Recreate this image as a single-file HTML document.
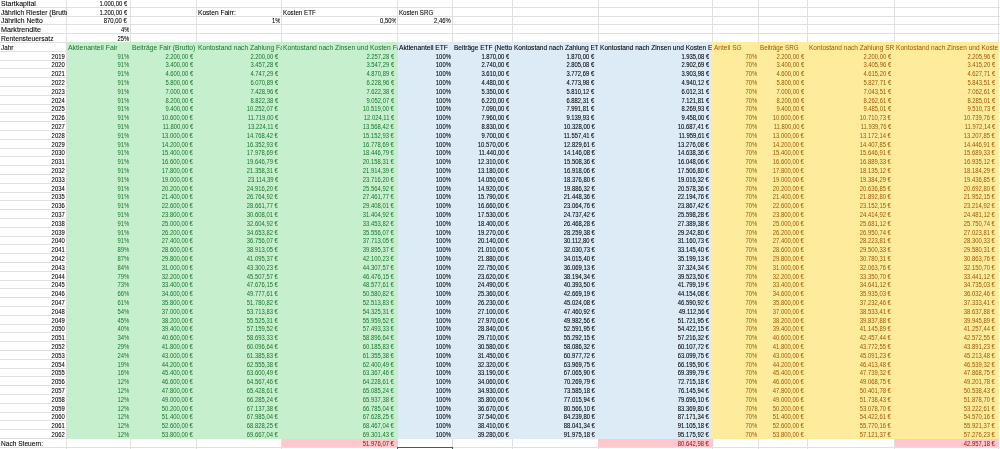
<!DOCTYPE html><html><head><meta charset="utf-8"><style>
html,body{margin:0;padding:0;width:1000px;height:449px;overflow:hidden;background:#fff;}
#s{position:absolute;left:0;top:0;width:1000px;height:449px;overflow:hidden;font-family:"Liberation Sans",sans-serif;font-size:6.6px;filter:blur(0px);}
.f{position:absolute;}
.h{position:absolute;height:1px;background:#e0e0e0;}
.v{position:absolute;width:1px;background:#e0e0e0;}
.c{position:absolute;height:8.8px;overflow:hidden;white-space:nowrap;line-height:8.8px;}
.c span{display:inline-block;-webkit-text-stroke:0px currentColor;}
.l{text-align:left;} .l span{transform-origin:0 0;}
.r{text-align:right;} .r span{transform-origin:100% 0;}
.k{color:#000;} .k span,.bl span{-webkit-text-stroke:0.08px #000;} .g{color:#1a7428;} .o{color:#9c5700;} .b{color:#9c0006;} .bl{color:#000;}

</style></head><body><div id="s">
<div class="h" style="left:0;top:6.80px;width:1000px"></div>
<div class="h" style="left:0;top:15.60px;width:1000px"></div>
<div class="h" style="left:0;top:24.40px;width:1000px"></div>
<div class="h" style="left:0;top:33.20px;width:1000px"></div>
<div class="h" style="left:0;top:42.00px;width:1000px"></div>
<div class="h" style="left:0;top:50.80px;width:66.75px"></div>
<div class="h" style="left:998.50px;top:50.80px;width:1.50px"></div>
<div class="h" style="left:0;top:59.60px;width:66.75px"></div>
<div class="h" style="left:998.50px;top:59.60px;width:1.50px"></div>
<div class="h" style="left:0;top:68.40px;width:66.75px"></div>
<div class="h" style="left:998.50px;top:68.40px;width:1.50px"></div>
<div class="h" style="left:0;top:77.20px;width:66.75px"></div>
<div class="h" style="left:998.50px;top:77.20px;width:1.50px"></div>
<div class="h" style="left:0;top:86.00px;width:66.75px"></div>
<div class="h" style="left:998.50px;top:86.00px;width:1.50px"></div>
<div class="h" style="left:0;top:94.80px;width:66.75px"></div>
<div class="h" style="left:998.50px;top:94.80px;width:1.50px"></div>
<div class="h" style="left:0;top:103.60px;width:66.75px"></div>
<div class="h" style="left:998.50px;top:103.60px;width:1.50px"></div>
<div class="h" style="left:0;top:112.40px;width:66.75px"></div>
<div class="h" style="left:998.50px;top:112.40px;width:1.50px"></div>
<div class="h" style="left:0;top:121.20px;width:66.75px"></div>
<div class="h" style="left:998.50px;top:121.20px;width:1.50px"></div>
<div class="h" style="left:0;top:130.00px;width:66.75px"></div>
<div class="h" style="left:998.50px;top:130.00px;width:1.50px"></div>
<div class="h" style="left:0;top:138.80px;width:66.75px"></div>
<div class="h" style="left:998.50px;top:138.80px;width:1.50px"></div>
<div class="h" style="left:0;top:147.60px;width:66.75px"></div>
<div class="h" style="left:998.50px;top:147.60px;width:1.50px"></div>
<div class="h" style="left:0;top:156.40px;width:66.75px"></div>
<div class="h" style="left:998.50px;top:156.40px;width:1.50px"></div>
<div class="h" style="left:0;top:165.20px;width:66.75px"></div>
<div class="h" style="left:998.50px;top:165.20px;width:1.50px"></div>
<div class="h" style="left:0;top:174.00px;width:66.75px"></div>
<div class="h" style="left:998.50px;top:174.00px;width:1.50px"></div>
<div class="h" style="left:0;top:182.80px;width:66.75px"></div>
<div class="h" style="left:998.50px;top:182.80px;width:1.50px"></div>
<div class="h" style="left:0;top:191.60px;width:66.75px"></div>
<div class="h" style="left:998.50px;top:191.60px;width:1.50px"></div>
<div class="h" style="left:0;top:200.40px;width:66.75px"></div>
<div class="h" style="left:998.50px;top:200.40px;width:1.50px"></div>
<div class="h" style="left:0;top:209.20px;width:66.75px"></div>
<div class="h" style="left:998.50px;top:209.20px;width:1.50px"></div>
<div class="h" style="left:0;top:218.00px;width:66.75px"></div>
<div class="h" style="left:998.50px;top:218.00px;width:1.50px"></div>
<div class="h" style="left:0;top:226.80px;width:66.75px"></div>
<div class="h" style="left:998.50px;top:226.80px;width:1.50px"></div>
<div class="h" style="left:0;top:235.60px;width:66.75px"></div>
<div class="h" style="left:998.50px;top:235.60px;width:1.50px"></div>
<div class="h" style="left:0;top:244.40px;width:66.75px"></div>
<div class="h" style="left:998.50px;top:244.40px;width:1.50px"></div>
<div class="h" style="left:0;top:253.20px;width:66.75px"></div>
<div class="h" style="left:998.50px;top:253.20px;width:1.50px"></div>
<div class="h" style="left:0;top:262.00px;width:66.75px"></div>
<div class="h" style="left:998.50px;top:262.00px;width:1.50px"></div>
<div class="h" style="left:0;top:270.80px;width:66.75px"></div>
<div class="h" style="left:998.50px;top:270.80px;width:1.50px"></div>
<div class="h" style="left:0;top:279.60px;width:66.75px"></div>
<div class="h" style="left:998.50px;top:279.60px;width:1.50px"></div>
<div class="h" style="left:0;top:288.40px;width:66.75px"></div>
<div class="h" style="left:998.50px;top:288.40px;width:1.50px"></div>
<div class="h" style="left:0;top:297.20px;width:66.75px"></div>
<div class="h" style="left:998.50px;top:297.20px;width:1.50px"></div>
<div class="h" style="left:0;top:306.00px;width:66.75px"></div>
<div class="h" style="left:998.50px;top:306.00px;width:1.50px"></div>
<div class="h" style="left:0;top:314.80px;width:66.75px"></div>
<div class="h" style="left:998.50px;top:314.80px;width:1.50px"></div>
<div class="h" style="left:0;top:323.60px;width:66.75px"></div>
<div class="h" style="left:998.50px;top:323.60px;width:1.50px"></div>
<div class="h" style="left:0;top:332.40px;width:66.75px"></div>
<div class="h" style="left:998.50px;top:332.40px;width:1.50px"></div>
<div class="h" style="left:0;top:341.20px;width:66.75px"></div>
<div class="h" style="left:998.50px;top:341.20px;width:1.50px"></div>
<div class="h" style="left:0;top:350.00px;width:66.75px"></div>
<div class="h" style="left:998.50px;top:350.00px;width:1.50px"></div>
<div class="h" style="left:0;top:358.80px;width:66.75px"></div>
<div class="h" style="left:998.50px;top:358.80px;width:1.50px"></div>
<div class="h" style="left:0;top:367.60px;width:66.75px"></div>
<div class="h" style="left:998.50px;top:367.60px;width:1.50px"></div>
<div class="h" style="left:0;top:376.40px;width:66.75px"></div>
<div class="h" style="left:998.50px;top:376.40px;width:1.50px"></div>
<div class="h" style="left:0;top:385.20px;width:66.75px"></div>
<div class="h" style="left:998.50px;top:385.20px;width:1.50px"></div>
<div class="h" style="left:0;top:394.00px;width:66.75px"></div>
<div class="h" style="left:998.50px;top:394.00px;width:1.50px"></div>
<div class="h" style="left:0;top:402.80px;width:66.75px"></div>
<div class="h" style="left:998.50px;top:402.80px;width:1.50px"></div>
<div class="h" style="left:0;top:411.60px;width:66.75px"></div>
<div class="h" style="left:998.50px;top:411.60px;width:1.50px"></div>
<div class="h" style="left:0;top:420.40px;width:66.75px"></div>
<div class="h" style="left:998.50px;top:420.40px;width:1.50px"></div>
<div class="h" style="left:0;top:429.20px;width:66.75px"></div>
<div class="h" style="left:998.50px;top:429.20px;width:1.50px"></div>
<div class="h" style="left:0;top:438.00px;width:1000px"></div>
<div class="h" style="left:0;top:446.80px;width:1000px"></div>
<div class="v" style="left:66.25px;top:0;height:42.50px"></div>
<div class="v" style="left:66.25px;top:438.50px;height:20px"></div>
<div class="v" style="left:130.00px;top:0;height:42.50px"></div>
<div class="v" style="left:130.00px;top:438.50px;height:20px"></div>
<div class="v" style="left:196.25px;top:0;height:42.50px"></div>
<div class="v" style="left:196.25px;top:438.50px;height:20px"></div>
<div class="v" style="left:281.25px;top:0;height:42.50px"></div>
<div class="v" style="left:281.25px;top:438.50px;height:20px"></div>
<div class="v" style="left:397.25px;top:0;height:42.50px"></div>
<div class="v" style="left:397.25px;top:438.50px;height:20px"></div>
<div class="v" style="left:452.00px;top:0;height:42.50px"></div>
<div class="v" style="left:452.00px;top:438.50px;height:20px"></div>
<div class="v" style="left:512.00px;top:0;height:42.50px"></div>
<div class="v" style="left:512.00px;top:438.50px;height:20px"></div>
<div class="v" style="left:597.75px;top:0;height:42.50px"></div>
<div class="v" style="left:597.75px;top:438.50px;height:20px"></div>
<div class="v" style="left:712.00px;top:0;height:42.50px"></div>
<div class="v" style="left:712.00px;top:438.50px;height:20px"></div>
<div class="v" style="left:758.00px;top:0;height:42.50px"></div>
<div class="v" style="left:758.00px;top:438.50px;height:20px"></div>
<div class="v" style="left:807.00px;top:0;height:42.50px"></div>
<div class="v" style="left:807.00px;top:438.50px;height:20px"></div>
<div class="v" style="left:894.00px;top:0;height:42.50px"></div>
<div class="v" style="left:894.00px;top:438.50px;height:20px"></div>
<div class="v" style="left:998.00px;top:0;height:42.50px"></div>
<div class="v" style="left:998.00px;top:438.50px;height:20px"></div>
<div class="v" style="left:66.25px;top:0;height:449px"></div>
<div class="v" style="left:998.00px;top:0;height:449px"></div>
<div class="f" style="left:66.75px;top:42.00px;width:331.00px;height:396.50px;background:#c6efce"></div>
<div class="f" style="left:397.75px;top:42.00px;width:314.25px;height:396.50px;background:#ddebf7"></div>
<div class="f" style="left:712.00px;top:42.00px;width:287.00px;height:396.50px;background:#ffeb9c"></div>
<div class="f" style="left:281.75px;top:438.50px;width:116.00px;height:8.80px;background:#ffc7ce"></div>
<div class="f" style="left:598.25px;top:438.50px;width:114.25px;height:8.80px;background:#ffc7ce"></div>
<div class="f" style="left:894.50px;top:438.50px;width:104.00px;height:8.80px;background:#ffc7ce"></div>
<div class="f" style="left:397px;top:447px;width:56px;height:10px;border:1px solid #217346;box-sizing:border-box"></div>
<div class="c l k" style="left:0.60px;top:-0.20px;width:66.15px"><span style="transform:scaleX(1.058)">Startkapital</span></div>
<div class="c r k" style="left:66.75px;top:-0.20px;width:60.15px"><span style="transform:scaleX(0.89)">1.000,00 €</span></div>
<div class="c l k" style="left:0.60px;top:8.60px;width:66.15px"><span style="transform:scaleX(1.023)">Jährlich Riester (Brutto)</span></div>
<div class="c r k" style="left:66.75px;top:8.60px;width:60.15px"><span style="transform:scaleX(0.89)">1.200,00 €</span></div>
<div class="c l k" style="left:198.15px;top:8.60px;width:83.60px"><span style="transform:scaleX(1.001)">Kosten Fairr:</span></div>
<div class="c l k" style="left:283.15px;top:8.60px;width:114.60px"><span style="transform:scaleX(0.94)">Kosten ETF</span></div>
<div class="c l k" style="left:399.15px;top:8.60px;width:53.35px"><span style="transform:scaleX(0.932)">Kosten SRG</span></div>
<div class="c l k" style="left:0.60px;top:17.40px;width:66.15px"><span style="transform:scaleX(1.035)">Jährlich Netto</span></div>
<div class="c r k" style="left:66.75px;top:17.40px;width:60.15px"><span style="transform:scaleX(0.89)">870,00 €</span></div>
<div class="c r k" style="left:196.75px;top:17.40px;width:83.70px"><span style="transform:scaleX(0.89)">1%</span></div>
<div class="c r k" style="left:281.75px;top:17.40px;width:114.70px"><span style="transform:scaleX(0.89)">0,50%</span></div>
<div class="c r k" style="left:397.75px;top:17.40px;width:53.45px"><span style="transform:scaleX(0.89)">2,46%</span></div>
<div class="c l k" style="left:0.60px;top:26.20px;width:66.15px"><span style="transform:scaleX(1.089)">Marktrendite</span></div>
<div class="c r k" style="left:66.75px;top:26.20px;width:62.45px"><span style="transform:scaleX(0.89)">4%</span></div>
<div class="c l k" style="left:0.60px;top:35.00px;width:129.90px"><span style="transform:scaleX(1.016)">Rentensteuersatz</span></div>
<div class="c r k" style="left:66.75px;top:35.00px;width:62.45px"><span style="transform:scaleX(0.89)">25%</span></div>
<div class="c l k" style="left:0.60px;top:43.80px;width:66.15px"><span style="transform:scaleX(0.953)">Jahr</span></div>
<div class="c l g" style="left:68.15px;top:43.80px;width:62.35px"><span style="transform:scaleX(1.05)">Aktienanteil Fair</span></div>
<div class="c l g" style="left:131.90px;top:43.80px;width:64.85px"><span style="transform:scaleX(1.028)">Beiträge Fair (Brutto)</span></div>
<div class="c l g" style="left:198.15px;top:43.80px;width:83.60px"><span style="transform:scaleX(1.014)">Kontostand nach Zahlung Fair</span></div>
<div class="c l g" style="left:283.15px;top:43.80px;width:114.60px"><span style="transform:scaleX(1.014)">Kontostand nach Zinsen und Kosten Fair</span></div>
<div class="c l bl" style="left:399.15px;top:43.80px;width:53.35px"><span style="transform:scaleX(1.011)">Aktienanteil ETF</span></div>
<div class="c l bl" style="left:453.90px;top:43.80px;width:58.60px"><span style="transform:scaleX(0.993)">Beiträge ETF (Netto)</span></div>
<div class="c l bl" style="left:513.90px;top:43.80px;width:84.35px"><span style="transform:scaleX(0.993)">Kontostand nach Zahlung ETF</span></div>
<div class="c l bl" style="left:599.65px;top:43.80px;width:112.85px"><span style="transform:scaleX(0.999)">Kontostand nach Zinsen und Kosten ETF</span></div>
<div class="c l o" style="left:713.90px;top:43.80px;width:44.60px"><span style="transform:scaleX(0.994)">Anteil SG</span></div>
<div class="c l o" style="left:759.90px;top:43.80px;width:47.60px"><span style="transform:scaleX(0.946)">Beiträge SRG</span></div>
<div class="c l o" style="left:808.90px;top:43.80px;width:85.60px"><span style="transform:scaleX(0.989)">Kontostand nach Zahlung SRG</span></div>
<div class="c l o" style="left:895.90px;top:43.80px;width:102.60px"><span style="transform:scaleX(0.996)">Kontostand nach Zinsen und Kosten SRG</span></div>
<div class="c r k" style="left:-0.80px;top:52.60px;width:65.75px"><span style="transform:scaleX(0.89)">2019</span></div>
<div class="c r g" style="left:66.75px;top:52.60px;width:62.45px"><span style="transform:scaleX(0.89)">91%</span></div>
<div class="c r g" style="left:130.50px;top:52.60px;width:62.65px"><span style="transform:scaleX(0.89)">2.200,00 €</span></div>
<div class="c r g" style="left:196.75px;top:52.60px;width:81.40px"><span style="transform:scaleX(0.89)">2.200,00 €</span></div>
<div class="c r g" style="left:281.75px;top:52.60px;width:112.40px"><span style="transform:scaleX(0.89)">2.257,28 €</span></div>
<div class="c r bl" style="left:397.75px;top:52.60px;width:53.45px"><span style="transform:scaleX(0.89)">100%</span></div>
<div class="c r bl" style="left:452.50px;top:52.60px;width:56.40px"><span style="transform:scaleX(0.89)">1.870,00 €</span></div>
<div class="c r bl" style="left:512.50px;top:52.60px;width:82.15px"><span style="transform:scaleX(0.89)">1.870,00 €</span></div>
<div class="c r bl" style="left:598.25px;top:52.60px;width:110.65px"><span style="transform:scaleX(0.89)">1.935,08 €</span></div>
<div class="c r o" style="left:712.50px;top:52.60px;width:44.70px"><span style="transform:scaleX(0.89)">70%</span></div>
<div class="c r o" style="left:758.50px;top:52.60px;width:45.40px"><span style="transform:scaleX(0.89)">2.200,00 €</span></div>
<div class="c r o" style="left:807.50px;top:52.60px;width:83.40px"><span style="transform:scaleX(0.89)">2.200,00 €</span></div>
<div class="c r o" style="left:894.50px;top:52.60px;width:100.40px"><span style="transform:scaleX(0.89)">2.205,96 €</span></div>
<div class="c r k" style="left:-0.80px;top:61.40px;width:65.75px"><span style="transform:scaleX(0.89)">2020</span></div>
<div class="c r g" style="left:66.75px;top:61.40px;width:62.45px"><span style="transform:scaleX(0.89)">91%</span></div>
<div class="c r g" style="left:130.50px;top:61.40px;width:62.65px"><span style="transform:scaleX(0.89)">3.400,00 €</span></div>
<div class="c r g" style="left:196.75px;top:61.40px;width:81.40px"><span style="transform:scaleX(0.89)">3.457,28 €</span></div>
<div class="c r g" style="left:281.75px;top:61.40px;width:112.40px"><span style="transform:scaleX(0.89)">3.547,29 €</span></div>
<div class="c r bl" style="left:397.75px;top:61.40px;width:53.45px"><span style="transform:scaleX(0.89)">100%</span></div>
<div class="c r bl" style="left:452.50px;top:61.40px;width:56.40px"><span style="transform:scaleX(0.89)">2.740,00 €</span></div>
<div class="c r bl" style="left:512.50px;top:61.40px;width:82.15px"><span style="transform:scaleX(0.89)">2.805,08 €</span></div>
<div class="c r bl" style="left:598.25px;top:61.40px;width:110.65px"><span style="transform:scaleX(0.89)">2.902,69 €</span></div>
<div class="c r o" style="left:712.50px;top:61.40px;width:44.70px"><span style="transform:scaleX(0.89)">70%</span></div>
<div class="c r o" style="left:758.50px;top:61.40px;width:45.40px"><span style="transform:scaleX(0.89)">3.400,00 €</span></div>
<div class="c r o" style="left:807.50px;top:61.40px;width:83.40px"><span style="transform:scaleX(0.89)">3.405,96 €</span></div>
<div class="c r o" style="left:894.50px;top:61.40px;width:100.40px"><span style="transform:scaleX(0.89)">3.415,20 €</span></div>
<div class="c r k" style="left:-0.80px;top:70.20px;width:65.75px"><span style="transform:scaleX(0.89)">2021</span></div>
<div class="c r g" style="left:66.75px;top:70.20px;width:62.45px"><span style="transform:scaleX(0.89)">91%</span></div>
<div class="c r g" style="left:130.50px;top:70.20px;width:62.65px"><span style="transform:scaleX(0.89)">4.600,00 €</span></div>
<div class="c r g" style="left:196.75px;top:70.20px;width:81.40px"><span style="transform:scaleX(0.89)">4.747,29 €</span></div>
<div class="c r g" style="left:281.75px;top:70.20px;width:112.40px"><span style="transform:scaleX(0.89)">4.870,89 €</span></div>
<div class="c r bl" style="left:397.75px;top:70.20px;width:53.45px"><span style="transform:scaleX(0.89)">100%</span></div>
<div class="c r bl" style="left:452.50px;top:70.20px;width:56.40px"><span style="transform:scaleX(0.89)">3.610,00 €</span></div>
<div class="c r bl" style="left:512.50px;top:70.20px;width:82.15px"><span style="transform:scaleX(0.89)">3.772,69 €</span></div>
<div class="c r bl" style="left:598.25px;top:70.20px;width:110.65px"><span style="transform:scaleX(0.89)">3.903,98 €</span></div>
<div class="c r o" style="left:712.50px;top:70.20px;width:44.70px"><span style="transform:scaleX(0.89)">70%</span></div>
<div class="c r o" style="left:758.50px;top:70.20px;width:45.40px"><span style="transform:scaleX(0.89)">4.600,00 €</span></div>
<div class="c r o" style="left:807.50px;top:70.20px;width:83.40px"><span style="transform:scaleX(0.89)">4.615,20 €</span></div>
<div class="c r o" style="left:894.50px;top:70.20px;width:100.40px"><span style="transform:scaleX(0.89)">4.627,71 €</span></div>
<div class="c r k" style="left:-0.80px;top:79.00px;width:65.75px"><span style="transform:scaleX(0.89)">2022</span></div>
<div class="c r g" style="left:66.75px;top:79.00px;width:62.45px"><span style="transform:scaleX(0.89)">91%</span></div>
<div class="c r g" style="left:130.50px;top:79.00px;width:62.65px"><span style="transform:scaleX(0.89)">5.800,00 €</span></div>
<div class="c r g" style="left:196.75px;top:79.00px;width:81.40px"><span style="transform:scaleX(0.89)">6.070,89 €</span></div>
<div class="c r g" style="left:281.75px;top:79.00px;width:112.40px"><span style="transform:scaleX(0.89)">6.228,96 €</span></div>
<div class="c r bl" style="left:397.75px;top:79.00px;width:53.45px"><span style="transform:scaleX(0.89)">100%</span></div>
<div class="c r bl" style="left:452.50px;top:79.00px;width:56.40px"><span style="transform:scaleX(0.89)">4.480,00 €</span></div>
<div class="c r bl" style="left:512.50px;top:79.00px;width:82.15px"><span style="transform:scaleX(0.89)">4.773,98 €</span></div>
<div class="c r bl" style="left:598.25px;top:79.00px;width:110.65px"><span style="transform:scaleX(0.89)">4.940,12 €</span></div>
<div class="c r o" style="left:712.50px;top:79.00px;width:44.70px"><span style="transform:scaleX(0.89)">70%</span></div>
<div class="c r o" style="left:758.50px;top:79.00px;width:45.40px"><span style="transform:scaleX(0.89)">5.800,00 €</span></div>
<div class="c r o" style="left:807.50px;top:79.00px;width:83.40px"><span style="transform:scaleX(0.89)">5.827,71 €</span></div>
<div class="c r o" style="left:894.50px;top:79.00px;width:100.40px"><span style="transform:scaleX(0.89)">5.843,51 €</span></div>
<div class="c r k" style="left:-0.80px;top:87.80px;width:65.75px"><span style="transform:scaleX(0.89)">2023</span></div>
<div class="c r g" style="left:66.75px;top:87.80px;width:62.45px"><span style="transform:scaleX(0.89)">91%</span></div>
<div class="c r g" style="left:130.50px;top:87.80px;width:62.65px"><span style="transform:scaleX(0.89)">7.000,00 €</span></div>
<div class="c r g" style="left:196.75px;top:87.80px;width:81.40px"><span style="transform:scaleX(0.89)">7.428,96 €</span></div>
<div class="c r g" style="left:281.75px;top:87.80px;width:112.40px"><span style="transform:scaleX(0.89)">7.622,38 €</span></div>
<div class="c r bl" style="left:397.75px;top:87.80px;width:53.45px"><span style="transform:scaleX(0.89)">100%</span></div>
<div class="c r bl" style="left:452.50px;top:87.80px;width:56.40px"><span style="transform:scaleX(0.89)">5.350,00 €</span></div>
<div class="c r bl" style="left:512.50px;top:87.80px;width:82.15px"><span style="transform:scaleX(0.89)">5.810,12 €</span></div>
<div class="c r bl" style="left:598.25px;top:87.80px;width:110.65px"><span style="transform:scaleX(0.89)">6.012,31 €</span></div>
<div class="c r o" style="left:712.50px;top:87.80px;width:44.70px"><span style="transform:scaleX(0.89)">70%</span></div>
<div class="c r o" style="left:758.50px;top:87.80px;width:45.40px"><span style="transform:scaleX(0.89)">7.000,00 €</span></div>
<div class="c r o" style="left:807.50px;top:87.80px;width:83.40px"><span style="transform:scaleX(0.89)">7.043,51 €</span></div>
<div class="c r o" style="left:894.50px;top:87.80px;width:100.40px"><span style="transform:scaleX(0.89)">7.062,61 €</span></div>
<div class="c r k" style="left:-0.80px;top:96.60px;width:65.75px"><span style="transform:scaleX(0.89)">2024</span></div>
<div class="c r g" style="left:66.75px;top:96.60px;width:62.45px"><span style="transform:scaleX(0.89)">91%</span></div>
<div class="c r g" style="left:130.50px;top:96.60px;width:62.65px"><span style="transform:scaleX(0.89)">8.200,00 €</span></div>
<div class="c r g" style="left:196.75px;top:96.60px;width:81.40px"><span style="transform:scaleX(0.89)">8.822,38 €</span></div>
<div class="c r g" style="left:281.75px;top:96.60px;width:112.40px"><span style="transform:scaleX(0.89)">9.052,07 €</span></div>
<div class="c r bl" style="left:397.75px;top:96.60px;width:53.45px"><span style="transform:scaleX(0.89)">100%</span></div>
<div class="c r bl" style="left:452.50px;top:96.60px;width:56.40px"><span style="transform:scaleX(0.89)">6.220,00 €</span></div>
<div class="c r bl" style="left:512.50px;top:96.60px;width:82.15px"><span style="transform:scaleX(0.89)">6.882,31 €</span></div>
<div class="c r bl" style="left:598.25px;top:96.60px;width:110.65px"><span style="transform:scaleX(0.89)">7.121,81 €</span></div>
<div class="c r o" style="left:712.50px;top:96.60px;width:44.70px"><span style="transform:scaleX(0.89)">70%</span></div>
<div class="c r o" style="left:758.50px;top:96.60px;width:45.40px"><span style="transform:scaleX(0.89)">8.200,00 €</span></div>
<div class="c r o" style="left:807.50px;top:96.60px;width:83.40px"><span style="transform:scaleX(0.89)">8.262,61 €</span></div>
<div class="c r o" style="left:894.50px;top:96.60px;width:100.40px"><span style="transform:scaleX(0.89)">8.285,01 €</span></div>
<div class="c r k" style="left:-0.80px;top:105.40px;width:65.75px"><span style="transform:scaleX(0.89)">2025</span></div>
<div class="c r g" style="left:66.75px;top:105.40px;width:62.45px"><span style="transform:scaleX(0.89)">91%</span></div>
<div class="c r g" style="left:130.50px;top:105.40px;width:62.65px"><span style="transform:scaleX(0.89)">9.400,00 €</span></div>
<div class="c r g" style="left:196.75px;top:105.40px;width:81.40px"><span style="transform:scaleX(0.89)">10.252,07 €</span></div>
<div class="c r g" style="left:281.75px;top:105.40px;width:112.40px"><span style="transform:scaleX(0.89)">10.519,00 €</span></div>
<div class="c r bl" style="left:397.75px;top:105.40px;width:53.45px"><span style="transform:scaleX(0.89)">100%</span></div>
<div class="c r bl" style="left:452.50px;top:105.40px;width:56.40px"><span style="transform:scaleX(0.89)">7.090,00 €</span></div>
<div class="c r bl" style="left:512.50px;top:105.40px;width:82.15px"><span style="transform:scaleX(0.89)">7.991,81 €</span></div>
<div class="c r bl" style="left:598.25px;top:105.40px;width:110.65px"><span style="transform:scaleX(0.89)">8.269,93 €</span></div>
<div class="c r o" style="left:712.50px;top:105.40px;width:44.70px"><span style="transform:scaleX(0.89)">70%</span></div>
<div class="c r o" style="left:758.50px;top:105.40px;width:45.40px"><span style="transform:scaleX(0.89)">9.400,00 €</span></div>
<div class="c r o" style="left:807.50px;top:105.40px;width:83.40px"><span style="transform:scaleX(0.89)">9.485,01 €</span></div>
<div class="c r o" style="left:894.50px;top:105.40px;width:100.40px"><span style="transform:scaleX(0.89)">9.510,73 €</span></div>
<div class="c r k" style="left:-0.80px;top:114.20px;width:65.75px"><span style="transform:scaleX(0.89)">2026</span></div>
<div class="c r g" style="left:66.75px;top:114.20px;width:62.45px"><span style="transform:scaleX(0.89)">91%</span></div>
<div class="c r g" style="left:130.50px;top:114.20px;width:62.65px"><span style="transform:scaleX(0.89)">10.600,00 €</span></div>
<div class="c r g" style="left:196.75px;top:114.20px;width:81.40px"><span style="transform:scaleX(0.89)">11.719,00 €</span></div>
<div class="c r g" style="left:281.75px;top:114.20px;width:112.40px"><span style="transform:scaleX(0.89)">12.024,11 €</span></div>
<div class="c r bl" style="left:397.75px;top:114.20px;width:53.45px"><span style="transform:scaleX(0.89)">100%</span></div>
<div class="c r bl" style="left:452.50px;top:114.20px;width:56.40px"><span style="transform:scaleX(0.89)">7.960,00 €</span></div>
<div class="c r bl" style="left:512.50px;top:114.20px;width:82.15px"><span style="transform:scaleX(0.89)">9.139,93 €</span></div>
<div class="c r bl" style="left:598.25px;top:114.20px;width:110.65px"><span style="transform:scaleX(0.89)">9.458,00 €</span></div>
<div class="c r o" style="left:712.50px;top:114.20px;width:44.70px"><span style="transform:scaleX(0.89)">70%</span></div>
<div class="c r o" style="left:758.50px;top:114.20px;width:45.40px"><span style="transform:scaleX(0.89)">10.600,00 €</span></div>
<div class="c r o" style="left:807.50px;top:114.20px;width:83.40px"><span style="transform:scaleX(0.89)">10.710,73 €</span></div>
<div class="c r o" style="left:894.50px;top:114.20px;width:100.40px"><span style="transform:scaleX(0.89)">10.739,76 €</span></div>
<div class="c r k" style="left:-0.80px;top:123.00px;width:65.75px"><span style="transform:scaleX(0.89)">2027</span></div>
<div class="c r g" style="left:66.75px;top:123.00px;width:62.45px"><span style="transform:scaleX(0.89)">91%</span></div>
<div class="c r g" style="left:130.50px;top:123.00px;width:62.65px"><span style="transform:scaleX(0.89)">11.800,00 €</span></div>
<div class="c r g" style="left:196.75px;top:123.00px;width:81.40px"><span style="transform:scaleX(0.89)">13.224,11 €</span></div>
<div class="c r g" style="left:281.75px;top:123.00px;width:112.40px"><span style="transform:scaleX(0.89)">13.568,42 €</span></div>
<div class="c r bl" style="left:397.75px;top:123.00px;width:53.45px"><span style="transform:scaleX(0.89)">100%</span></div>
<div class="c r bl" style="left:452.50px;top:123.00px;width:56.40px"><span style="transform:scaleX(0.89)">8.830,00 €</span></div>
<div class="c r bl" style="left:512.50px;top:123.00px;width:82.15px"><span style="transform:scaleX(0.89)">10.328,00 €</span></div>
<div class="c r bl" style="left:598.25px;top:123.00px;width:110.65px"><span style="transform:scaleX(0.89)">10.687,41 €</span></div>
<div class="c r o" style="left:712.50px;top:123.00px;width:44.70px"><span style="transform:scaleX(0.89)">70%</span></div>
<div class="c r o" style="left:758.50px;top:123.00px;width:45.40px"><span style="transform:scaleX(0.89)">11.800,00 €</span></div>
<div class="c r o" style="left:807.50px;top:123.00px;width:83.40px"><span style="transform:scaleX(0.89)">11.939,76 €</span></div>
<div class="c r o" style="left:894.50px;top:123.00px;width:100.40px"><span style="transform:scaleX(0.89)">11.972,14 €</span></div>
<div class="c r k" style="left:-0.80px;top:131.80px;width:65.75px"><span style="transform:scaleX(0.89)">2028</span></div>
<div class="c r g" style="left:66.75px;top:131.80px;width:62.45px"><span style="transform:scaleX(0.89)">91%</span></div>
<div class="c r g" style="left:130.50px;top:131.80px;width:62.65px"><span style="transform:scaleX(0.89)">13.000,00 €</span></div>
<div class="c r g" style="left:196.75px;top:131.80px;width:81.40px"><span style="transform:scaleX(0.89)">14.768,42 €</span></div>
<div class="c r g" style="left:281.75px;top:131.80px;width:112.40px"><span style="transform:scaleX(0.89)">15.152,93 €</span></div>
<div class="c r bl" style="left:397.75px;top:131.80px;width:53.45px"><span style="transform:scaleX(0.89)">100%</span></div>
<div class="c r bl" style="left:452.50px;top:131.80px;width:56.40px"><span style="transform:scaleX(0.89)">9.700,00 €</span></div>
<div class="c r bl" style="left:512.50px;top:131.80px;width:82.15px"><span style="transform:scaleX(0.89)">11.557,41 €</span></div>
<div class="c r bl" style="left:598.25px;top:131.80px;width:110.65px"><span style="transform:scaleX(0.89)">11.959,61 €</span></div>
<div class="c r o" style="left:712.50px;top:131.80px;width:44.70px"><span style="transform:scaleX(0.89)">70%</span></div>
<div class="c r o" style="left:758.50px;top:131.80px;width:45.40px"><span style="transform:scaleX(0.89)">13.000,00 €</span></div>
<div class="c r o" style="left:807.50px;top:131.80px;width:83.40px"><span style="transform:scaleX(0.89)">13.172,14 €</span></div>
<div class="c r o" style="left:894.50px;top:131.80px;width:100.40px"><span style="transform:scaleX(0.89)">13.207,85 €</span></div>
<div class="c r k" style="left:-0.80px;top:140.60px;width:65.75px"><span style="transform:scaleX(0.89)">2029</span></div>
<div class="c r g" style="left:66.75px;top:140.60px;width:62.45px"><span style="transform:scaleX(0.89)">91%</span></div>
<div class="c r g" style="left:130.50px;top:140.60px;width:62.65px"><span style="transform:scaleX(0.89)">14.200,00 €</span></div>
<div class="c r g" style="left:196.75px;top:140.60px;width:81.40px"><span style="transform:scaleX(0.89)">16.352,93 €</span></div>
<div class="c r g" style="left:281.75px;top:140.60px;width:112.40px"><span style="transform:scaleX(0.89)">16.778,69 €</span></div>
<div class="c r bl" style="left:397.75px;top:140.60px;width:53.45px"><span style="transform:scaleX(0.89)">100%</span></div>
<div class="c r bl" style="left:452.50px;top:140.60px;width:56.40px"><span style="transform:scaleX(0.89)">10.570,00 €</span></div>
<div class="c r bl" style="left:512.50px;top:140.60px;width:82.15px"><span style="transform:scaleX(0.89)">12.829,61 €</span></div>
<div class="c r bl" style="left:598.25px;top:140.60px;width:110.65px"><span style="transform:scaleX(0.89)">13.276,08 €</span></div>
<div class="c r o" style="left:712.50px;top:140.60px;width:44.70px"><span style="transform:scaleX(0.89)">70%</span></div>
<div class="c r o" style="left:758.50px;top:140.60px;width:45.40px"><span style="transform:scaleX(0.89)">14.200,00 €</span></div>
<div class="c r o" style="left:807.50px;top:140.60px;width:83.40px"><span style="transform:scaleX(0.89)">14.407,85 €</span></div>
<div class="c r o" style="left:894.50px;top:140.60px;width:100.40px"><span style="transform:scaleX(0.89)">14.446,91 €</span></div>
<div class="c r k" style="left:-0.80px;top:149.40px;width:65.75px"><span style="transform:scaleX(0.89)">2030</span></div>
<div class="c r g" style="left:66.75px;top:149.40px;width:62.45px"><span style="transform:scaleX(0.89)">91%</span></div>
<div class="c r g" style="left:130.50px;top:149.40px;width:62.65px"><span style="transform:scaleX(0.89)">15.400,00 €</span></div>
<div class="c r g" style="left:196.75px;top:149.40px;width:81.40px"><span style="transform:scaleX(0.89)">17.978,69 €</span></div>
<div class="c r g" style="left:281.75px;top:149.40px;width:112.40px"><span style="transform:scaleX(0.89)">18.446,79 €</span></div>
<div class="c r bl" style="left:397.75px;top:149.40px;width:53.45px"><span style="transform:scaleX(0.89)">100%</span></div>
<div class="c r bl" style="left:452.50px;top:149.40px;width:56.40px"><span style="transform:scaleX(0.89)">11.440,00 €</span></div>
<div class="c r bl" style="left:512.50px;top:149.40px;width:82.15px"><span style="transform:scaleX(0.89)">14.146,08 €</span></div>
<div class="c r bl" style="left:598.25px;top:149.40px;width:110.65px"><span style="transform:scaleX(0.89)">14.638,36 €</span></div>
<div class="c r o" style="left:712.50px;top:149.40px;width:44.70px"><span style="transform:scaleX(0.89)">70%</span></div>
<div class="c r o" style="left:758.50px;top:149.40px;width:45.40px"><span style="transform:scaleX(0.89)">15.400,00 €</span></div>
<div class="c r o" style="left:807.50px;top:149.40px;width:83.40px"><span style="transform:scaleX(0.89)">15.646,91 €</span></div>
<div class="c r o" style="left:894.50px;top:149.40px;width:100.40px"><span style="transform:scaleX(0.89)">15.689,33 €</span></div>
<div class="c r k" style="left:-0.80px;top:158.20px;width:65.75px"><span style="transform:scaleX(0.89)">2031</span></div>
<div class="c r g" style="left:66.75px;top:158.20px;width:62.45px"><span style="transform:scaleX(0.89)">91%</span></div>
<div class="c r g" style="left:130.50px;top:158.20px;width:62.65px"><span style="transform:scaleX(0.89)">16.600,00 €</span></div>
<div class="c r g" style="left:196.75px;top:158.20px;width:81.40px"><span style="transform:scaleX(0.89)">19.646,79 €</span></div>
<div class="c r g" style="left:281.75px;top:158.20px;width:112.40px"><span style="transform:scaleX(0.89)">20.158,31 €</span></div>
<div class="c r bl" style="left:397.75px;top:158.20px;width:53.45px"><span style="transform:scaleX(0.89)">100%</span></div>
<div class="c r bl" style="left:452.50px;top:158.20px;width:56.40px"><span style="transform:scaleX(0.89)">12.310,00 €</span></div>
<div class="c r bl" style="left:512.50px;top:158.20px;width:82.15px"><span style="transform:scaleX(0.89)">15.508,36 €</span></div>
<div class="c r bl" style="left:598.25px;top:158.20px;width:110.65px"><span style="transform:scaleX(0.89)">16.048,06 €</span></div>
<div class="c r o" style="left:712.50px;top:158.20px;width:44.70px"><span style="transform:scaleX(0.89)">70%</span></div>
<div class="c r o" style="left:758.50px;top:158.20px;width:45.40px"><span style="transform:scaleX(0.89)">16.600,00 €</span></div>
<div class="c r o" style="left:807.50px;top:158.20px;width:83.40px"><span style="transform:scaleX(0.89)">16.889,33 €</span></div>
<div class="c r o" style="left:894.50px;top:158.20px;width:100.40px"><span style="transform:scaleX(0.89)">16.935,12 €</span></div>
<div class="c r k" style="left:-0.80px;top:167.00px;width:65.75px"><span style="transform:scaleX(0.89)">2032</span></div>
<div class="c r g" style="left:66.75px;top:167.00px;width:62.45px"><span style="transform:scaleX(0.89)">91%</span></div>
<div class="c r g" style="left:130.50px;top:167.00px;width:62.65px"><span style="transform:scaleX(0.89)">17.800,00 €</span></div>
<div class="c r g" style="left:196.75px;top:167.00px;width:81.40px"><span style="transform:scaleX(0.89)">21.358,31 €</span></div>
<div class="c r g" style="left:281.75px;top:167.00px;width:112.40px"><span style="transform:scaleX(0.89)">21.914,39 €</span></div>
<div class="c r bl" style="left:397.75px;top:167.00px;width:53.45px"><span style="transform:scaleX(0.89)">100%</span></div>
<div class="c r bl" style="left:452.50px;top:167.00px;width:56.40px"><span style="transform:scaleX(0.89)">13.180,00 €</span></div>
<div class="c r bl" style="left:512.50px;top:167.00px;width:82.15px"><span style="transform:scaleX(0.89)">16.918,06 €</span></div>
<div class="c r bl" style="left:598.25px;top:167.00px;width:110.65px"><span style="transform:scaleX(0.89)">17.506,80 €</span></div>
<div class="c r o" style="left:712.50px;top:167.00px;width:44.70px"><span style="transform:scaleX(0.89)">70%</span></div>
<div class="c r o" style="left:758.50px;top:167.00px;width:45.40px"><span style="transform:scaleX(0.89)">17.800,00 €</span></div>
<div class="c r o" style="left:807.50px;top:167.00px;width:83.40px"><span style="transform:scaleX(0.89)">18.135,12 €</span></div>
<div class="c r o" style="left:894.50px;top:167.00px;width:100.40px"><span style="transform:scaleX(0.89)">18.184,29 €</span></div>
<div class="c r k" style="left:-0.80px;top:175.80px;width:65.75px"><span style="transform:scaleX(0.89)">2033</span></div>
<div class="c r g" style="left:66.75px;top:175.80px;width:62.45px"><span style="transform:scaleX(0.89)">91%</span></div>
<div class="c r g" style="left:130.50px;top:175.80px;width:62.65px"><span style="transform:scaleX(0.89)">19.000,00 €</span></div>
<div class="c r g" style="left:196.75px;top:175.80px;width:81.40px"><span style="transform:scaleX(0.89)">23.114,39 €</span></div>
<div class="c r g" style="left:281.75px;top:175.80px;width:112.40px"><span style="transform:scaleX(0.89)">23.716,20 €</span></div>
<div class="c r bl" style="left:397.75px;top:175.80px;width:53.45px"><span style="transform:scaleX(0.89)">100%</span></div>
<div class="c r bl" style="left:452.50px;top:175.80px;width:56.40px"><span style="transform:scaleX(0.89)">14.050,00 €</span></div>
<div class="c r bl" style="left:512.50px;top:175.80px;width:82.15px"><span style="transform:scaleX(0.89)">18.376,80 €</span></div>
<div class="c r bl" style="left:598.25px;top:175.80px;width:110.65px"><span style="transform:scaleX(0.89)">19.016,32 €</span></div>
<div class="c r o" style="left:712.50px;top:175.80px;width:44.70px"><span style="transform:scaleX(0.89)">70%</span></div>
<div class="c r o" style="left:758.50px;top:175.80px;width:45.40px"><span style="transform:scaleX(0.89)">19.000,00 €</span></div>
<div class="c r o" style="left:807.50px;top:175.80px;width:83.40px"><span style="transform:scaleX(0.89)">19.384,29 €</span></div>
<div class="c r o" style="left:894.50px;top:175.80px;width:100.40px"><span style="transform:scaleX(0.89)">19.436,85 €</span></div>
<div class="c r k" style="left:-0.80px;top:184.60px;width:65.75px"><span style="transform:scaleX(0.89)">2034</span></div>
<div class="c r g" style="left:66.75px;top:184.60px;width:62.45px"><span style="transform:scaleX(0.89)">91%</span></div>
<div class="c r g" style="left:130.50px;top:184.60px;width:62.65px"><span style="transform:scaleX(0.89)">20.200,00 €</span></div>
<div class="c r g" style="left:196.75px;top:184.60px;width:81.40px"><span style="transform:scaleX(0.89)">24.916,20 €</span></div>
<div class="c r g" style="left:281.75px;top:184.60px;width:112.40px"><span style="transform:scaleX(0.89)">25.564,92 €</span></div>
<div class="c r bl" style="left:397.75px;top:184.60px;width:53.45px"><span style="transform:scaleX(0.89)">100%</span></div>
<div class="c r bl" style="left:452.50px;top:184.60px;width:56.40px"><span style="transform:scaleX(0.89)">14.920,00 €</span></div>
<div class="c r bl" style="left:512.50px;top:184.60px;width:82.15px"><span style="transform:scaleX(0.89)">19.886,32 €</span></div>
<div class="c r bl" style="left:598.25px;top:184.60px;width:110.65px"><span style="transform:scaleX(0.89)">20.578,36 €</span></div>
<div class="c r o" style="left:712.50px;top:184.60px;width:44.70px"><span style="transform:scaleX(0.89)">70%</span></div>
<div class="c r o" style="left:758.50px;top:184.60px;width:45.40px"><span style="transform:scaleX(0.89)">20.200,00 €</span></div>
<div class="c r o" style="left:807.50px;top:184.60px;width:83.40px"><span style="transform:scaleX(0.89)">20.636,85 €</span></div>
<div class="c r o" style="left:894.50px;top:184.60px;width:100.40px"><span style="transform:scaleX(0.89)">20.692,80 €</span></div>
<div class="c r k" style="left:-0.80px;top:193.40px;width:65.75px"><span style="transform:scaleX(0.89)">2035</span></div>
<div class="c r g" style="left:66.75px;top:193.40px;width:62.45px"><span style="transform:scaleX(0.89)">91%</span></div>
<div class="c r g" style="left:130.50px;top:193.40px;width:62.65px"><span style="transform:scaleX(0.89)">21.400,00 €</span></div>
<div class="c r g" style="left:196.75px;top:193.40px;width:81.40px"><span style="transform:scaleX(0.89)">26.764,92 €</span></div>
<div class="c r g" style="left:281.75px;top:193.40px;width:112.40px"><span style="transform:scaleX(0.89)">27.461,77 €</span></div>
<div class="c r bl" style="left:397.75px;top:193.40px;width:53.45px"><span style="transform:scaleX(0.89)">100%</span></div>
<div class="c r bl" style="left:452.50px;top:193.40px;width:56.40px"><span style="transform:scaleX(0.89)">15.790,00 €</span></div>
<div class="c r bl" style="left:512.50px;top:193.40px;width:82.15px"><span style="transform:scaleX(0.89)">21.448,36 €</span></div>
<div class="c r bl" style="left:598.25px;top:193.40px;width:110.65px"><span style="transform:scaleX(0.89)">22.194,76 €</span></div>
<div class="c r o" style="left:712.50px;top:193.40px;width:44.70px"><span style="transform:scaleX(0.89)">70%</span></div>
<div class="c r o" style="left:758.50px;top:193.40px;width:45.40px"><span style="transform:scaleX(0.89)">21.400,00 €</span></div>
<div class="c r o" style="left:807.50px;top:193.40px;width:83.40px"><span style="transform:scaleX(0.89)">21.892,80 €</span></div>
<div class="c r o" style="left:894.50px;top:193.40px;width:100.40px"><span style="transform:scaleX(0.89)">21.952,15 €</span></div>
<div class="c r k" style="left:-0.80px;top:202.20px;width:65.75px"><span style="transform:scaleX(0.89)">2036</span></div>
<div class="c r g" style="left:66.75px;top:202.20px;width:62.45px"><span style="transform:scaleX(0.89)">91%</span></div>
<div class="c r g" style="left:130.50px;top:202.20px;width:62.65px"><span style="transform:scaleX(0.89)">22.600,00 €</span></div>
<div class="c r g" style="left:196.75px;top:202.20px;width:81.40px"><span style="transform:scaleX(0.89)">28.661,77 €</span></div>
<div class="c r g" style="left:281.75px;top:202.20px;width:112.40px"><span style="transform:scaleX(0.89)">29.408,01 €</span></div>
<div class="c r bl" style="left:397.75px;top:202.20px;width:53.45px"><span style="transform:scaleX(0.89)">100%</span></div>
<div class="c r bl" style="left:452.50px;top:202.20px;width:56.40px"><span style="transform:scaleX(0.89)">16.660,00 €</span></div>
<div class="c r bl" style="left:512.50px;top:202.20px;width:82.15px"><span style="transform:scaleX(0.89)">23.064,76 €</span></div>
<div class="c r bl" style="left:598.25px;top:202.20px;width:110.65px"><span style="transform:scaleX(0.89)">23.867,42 €</span></div>
<div class="c r o" style="left:712.50px;top:202.20px;width:44.70px"><span style="transform:scaleX(0.89)">70%</span></div>
<div class="c r o" style="left:758.50px;top:202.20px;width:45.40px"><span style="transform:scaleX(0.89)">22.600,00 €</span></div>
<div class="c r o" style="left:807.50px;top:202.20px;width:83.40px"><span style="transform:scaleX(0.89)">23.152,15 €</span></div>
<div class="c r o" style="left:894.50px;top:202.20px;width:100.40px"><span style="transform:scaleX(0.89)">23.214,92 €</span></div>
<div class="c r k" style="left:-0.80px;top:211.00px;width:65.75px"><span style="transform:scaleX(0.89)">2037</span></div>
<div class="c r g" style="left:66.75px;top:211.00px;width:62.45px"><span style="transform:scaleX(0.89)">91%</span></div>
<div class="c r g" style="left:130.50px;top:211.00px;width:62.65px"><span style="transform:scaleX(0.89)">23.800,00 €</span></div>
<div class="c r g" style="left:196.75px;top:211.00px;width:81.40px"><span style="transform:scaleX(0.89)">30.608,01 €</span></div>
<div class="c r g" style="left:281.75px;top:211.00px;width:112.40px"><span style="transform:scaleX(0.89)">31.404,92 €</span></div>
<div class="c r bl" style="left:397.75px;top:211.00px;width:53.45px"><span style="transform:scaleX(0.89)">100%</span></div>
<div class="c r bl" style="left:452.50px;top:211.00px;width:56.40px"><span style="transform:scaleX(0.89)">17.530,00 €</span></div>
<div class="c r bl" style="left:512.50px;top:211.00px;width:82.15px"><span style="transform:scaleX(0.89)">24.737,42 €</span></div>
<div class="c r bl" style="left:598.25px;top:211.00px;width:110.65px"><span style="transform:scaleX(0.89)">25.598,28 €</span></div>
<div class="c r o" style="left:712.50px;top:211.00px;width:44.70px"><span style="transform:scaleX(0.89)">70%</span></div>
<div class="c r o" style="left:758.50px;top:211.00px;width:45.40px"><span style="transform:scaleX(0.89)">23.800,00 €</span></div>
<div class="c r o" style="left:807.50px;top:211.00px;width:83.40px"><span style="transform:scaleX(0.89)">24.414,92 €</span></div>
<div class="c r o" style="left:894.50px;top:211.00px;width:100.40px"><span style="transform:scaleX(0.89)">24.481,12 €</span></div>
<div class="c r k" style="left:-0.80px;top:219.80px;width:65.75px"><span style="transform:scaleX(0.89)">2038</span></div>
<div class="c r g" style="left:66.75px;top:219.80px;width:62.45px"><span style="transform:scaleX(0.89)">91%</span></div>
<div class="c r g" style="left:130.50px;top:219.80px;width:62.65px"><span style="transform:scaleX(0.89)">25.000,00 €</span></div>
<div class="c r g" style="left:196.75px;top:219.80px;width:81.40px"><span style="transform:scaleX(0.89)">32.604,92 €</span></div>
<div class="c r g" style="left:281.75px;top:219.80px;width:112.40px"><span style="transform:scaleX(0.89)">33.453,82 €</span></div>
<div class="c r bl" style="left:397.75px;top:219.80px;width:53.45px"><span style="transform:scaleX(0.89)">100%</span></div>
<div class="c r bl" style="left:452.50px;top:219.80px;width:56.40px"><span style="transform:scaleX(0.89)">18.400,00 €</span></div>
<div class="c r bl" style="left:512.50px;top:219.80px;width:82.15px"><span style="transform:scaleX(0.89)">26.468,28 €</span></div>
<div class="c r bl" style="left:598.25px;top:219.80px;width:110.65px"><span style="transform:scaleX(0.89)">27.389,38 €</span></div>
<div class="c r o" style="left:712.50px;top:219.80px;width:44.70px"><span style="transform:scaleX(0.89)">70%</span></div>
<div class="c r o" style="left:758.50px;top:219.80px;width:45.40px"><span style="transform:scaleX(0.89)">25.000,00 €</span></div>
<div class="c r o" style="left:807.50px;top:219.80px;width:83.40px"><span style="transform:scaleX(0.89)">25.681,12 €</span></div>
<div class="c r o" style="left:894.50px;top:219.80px;width:100.40px"><span style="transform:scaleX(0.89)">25.750,74 €</span></div>
<div class="c r k" style="left:-0.80px;top:228.60px;width:65.75px"><span style="transform:scaleX(0.89)">2039</span></div>
<div class="c r g" style="left:66.75px;top:228.60px;width:62.45px"><span style="transform:scaleX(0.89)">91%</span></div>
<div class="c r g" style="left:130.50px;top:228.60px;width:62.65px"><span style="transform:scaleX(0.89)">26.200,00 €</span></div>
<div class="c r g" style="left:196.75px;top:228.60px;width:81.40px"><span style="transform:scaleX(0.89)">34.653,82 €</span></div>
<div class="c r g" style="left:281.75px;top:228.60px;width:112.40px"><span style="transform:scaleX(0.89)">35.556,07 €</span></div>
<div class="c r bl" style="left:397.75px;top:228.60px;width:53.45px"><span style="transform:scaleX(0.89)">100%</span></div>
<div class="c r bl" style="left:452.50px;top:228.60px;width:56.40px"><span style="transform:scaleX(0.89)">19.270,00 €</span></div>
<div class="c r bl" style="left:512.50px;top:228.60px;width:82.15px"><span style="transform:scaleX(0.89)">28.259,38 €</span></div>
<div class="c r bl" style="left:598.25px;top:228.60px;width:110.65px"><span style="transform:scaleX(0.89)">29.242,80 €</span></div>
<div class="c r o" style="left:712.50px;top:228.60px;width:44.70px"><span style="transform:scaleX(0.89)">70%</span></div>
<div class="c r o" style="left:758.50px;top:228.60px;width:45.40px"><span style="transform:scaleX(0.89)">26.200,00 €</span></div>
<div class="c r o" style="left:807.50px;top:228.60px;width:83.40px"><span style="transform:scaleX(0.89)">26.950,74 €</span></div>
<div class="c r o" style="left:894.50px;top:228.60px;width:100.40px"><span style="transform:scaleX(0.89)">27.023,81 €</span></div>
<div class="c r k" style="left:-0.80px;top:237.40px;width:65.75px"><span style="transform:scaleX(0.89)">2040</span></div>
<div class="c r g" style="left:66.75px;top:237.40px;width:62.45px"><span style="transform:scaleX(0.89)">91%</span></div>
<div class="c r g" style="left:130.50px;top:237.40px;width:62.65px"><span style="transform:scaleX(0.89)">27.400,00 €</span></div>
<div class="c r g" style="left:196.75px;top:237.40px;width:81.40px"><span style="transform:scaleX(0.89)">36.756,07 €</span></div>
<div class="c r g" style="left:281.75px;top:237.40px;width:112.40px"><span style="transform:scaleX(0.89)">37.713,05 €</span></div>
<div class="c r bl" style="left:397.75px;top:237.40px;width:53.45px"><span style="transform:scaleX(0.89)">100%</span></div>
<div class="c r bl" style="left:452.50px;top:237.40px;width:56.40px"><span style="transform:scaleX(0.89)">20.140,00 €</span></div>
<div class="c r bl" style="left:512.50px;top:237.40px;width:82.15px"><span style="transform:scaleX(0.89)">30.112,80 €</span></div>
<div class="c r bl" style="left:598.25px;top:237.40px;width:110.65px"><span style="transform:scaleX(0.89)">31.160,73 €</span></div>
<div class="c r o" style="left:712.50px;top:237.40px;width:44.70px"><span style="transform:scaleX(0.89)">70%</span></div>
<div class="c r o" style="left:758.50px;top:237.40px;width:45.40px"><span style="transform:scaleX(0.89)">27.400,00 €</span></div>
<div class="c r o" style="left:807.50px;top:237.40px;width:83.40px"><span style="transform:scaleX(0.89)">28.223,81 €</span></div>
<div class="c r o" style="left:894.50px;top:237.40px;width:100.40px"><span style="transform:scaleX(0.89)">28.300,33 €</span></div>
<div class="c r k" style="left:-0.80px;top:246.20px;width:65.75px"><span style="transform:scaleX(0.89)">2041</span></div>
<div class="c r g" style="left:66.75px;top:246.20px;width:62.45px"><span style="transform:scaleX(0.89)">89%</span></div>
<div class="c r g" style="left:130.50px;top:246.20px;width:62.65px"><span style="transform:scaleX(0.89)">28.600,00 €</span></div>
<div class="c r g" style="left:196.75px;top:246.20px;width:81.40px"><span style="transform:scaleX(0.89)">38.913,05 €</span></div>
<div class="c r g" style="left:281.75px;top:246.20px;width:112.40px"><span style="transform:scaleX(0.89)">39.895,37 €</span></div>
<div class="c r bl" style="left:397.75px;top:246.20px;width:53.45px"><span style="transform:scaleX(0.89)">100%</span></div>
<div class="c r bl" style="left:452.50px;top:246.20px;width:56.40px"><span style="transform:scaleX(0.89)">21.010,00 €</span></div>
<div class="c r bl" style="left:512.50px;top:246.20px;width:82.15px"><span style="transform:scaleX(0.89)">32.030,73 €</span></div>
<div class="c r bl" style="left:598.25px;top:246.20px;width:110.65px"><span style="transform:scaleX(0.89)">33.145,40 €</span></div>
<div class="c r o" style="left:712.50px;top:246.20px;width:44.70px"><span style="transform:scaleX(0.89)">70%</span></div>
<div class="c r o" style="left:758.50px;top:246.20px;width:45.40px"><span style="transform:scaleX(0.89)">28.600,00 €</span></div>
<div class="c r o" style="left:807.50px;top:246.20px;width:83.40px"><span style="transform:scaleX(0.89)">29.500,33 €</span></div>
<div class="c r o" style="left:894.50px;top:246.20px;width:100.40px"><span style="transform:scaleX(0.89)">29.580,31 €</span></div>
<div class="c r k" style="left:-0.80px;top:255.00px;width:65.75px"><span style="transform:scaleX(0.89)">2042</span></div>
<div class="c r g" style="left:66.75px;top:255.00px;width:62.45px"><span style="transform:scaleX(0.89)">87%</span></div>
<div class="c r g" style="left:130.50px;top:255.00px;width:62.65px"><span style="transform:scaleX(0.89)">29.800,00 €</span></div>
<div class="c r g" style="left:196.75px;top:255.00px;width:81.40px"><span style="transform:scaleX(0.89)">41.095,37 €</span></div>
<div class="c r g" style="left:281.75px;top:255.00px;width:112.40px"><span style="transform:scaleX(0.89)">42.100,23 €</span></div>
<div class="c r bl" style="left:397.75px;top:255.00px;width:53.45px"><span style="transform:scaleX(0.89)">100%</span></div>
<div class="c r bl" style="left:452.50px;top:255.00px;width:56.40px"><span style="transform:scaleX(0.89)">21.880,00 €</span></div>
<div class="c r bl" style="left:512.50px;top:255.00px;width:82.15px"><span style="transform:scaleX(0.89)">34.015,40 €</span></div>
<div class="c r bl" style="left:598.25px;top:255.00px;width:110.65px"><span style="transform:scaleX(0.89)">35.199,13 €</span></div>
<div class="c r o" style="left:712.50px;top:255.00px;width:44.70px"><span style="transform:scaleX(0.89)">70%</span></div>
<div class="c r o" style="left:758.50px;top:255.00px;width:45.40px"><span style="transform:scaleX(0.89)">29.800,00 €</span></div>
<div class="c r o" style="left:807.50px;top:255.00px;width:83.40px"><span style="transform:scaleX(0.89)">30.780,31 €</span></div>
<div class="c r o" style="left:894.50px;top:255.00px;width:100.40px"><span style="transform:scaleX(0.89)">30.863,76 €</span></div>
<div class="c r k" style="left:-0.80px;top:263.80px;width:65.75px"><span style="transform:scaleX(0.89)">2043</span></div>
<div class="c r g" style="left:66.75px;top:263.80px;width:62.45px"><span style="transform:scaleX(0.89)">84%</span></div>
<div class="c r g" style="left:130.50px;top:263.80px;width:62.65px"><span style="transform:scaleX(0.89)">31.000,00 €</span></div>
<div class="c r g" style="left:196.75px;top:263.80px;width:81.40px"><span style="transform:scaleX(0.89)">43.300,23 €</span></div>
<div class="c r g" style="left:281.75px;top:263.80px;width:112.40px"><span style="transform:scaleX(0.89)">44.307,57 €</span></div>
<div class="c r bl" style="left:397.75px;top:263.80px;width:53.45px"><span style="transform:scaleX(0.89)">100%</span></div>
<div class="c r bl" style="left:452.50px;top:263.80px;width:56.40px"><span style="transform:scaleX(0.89)">22.750,00 €</span></div>
<div class="c r bl" style="left:512.50px;top:263.80px;width:82.15px"><span style="transform:scaleX(0.89)">36.069,13 €</span></div>
<div class="c r bl" style="left:598.25px;top:263.80px;width:110.65px"><span style="transform:scaleX(0.89)">37.324,34 €</span></div>
<div class="c r o" style="left:712.50px;top:263.80px;width:44.70px"><span style="transform:scaleX(0.89)">70%</span></div>
<div class="c r o" style="left:758.50px;top:263.80px;width:45.40px"><span style="transform:scaleX(0.89)">31.000,00 €</span></div>
<div class="c r o" style="left:807.50px;top:263.80px;width:83.40px"><span style="transform:scaleX(0.89)">32.063,76 €</span></div>
<div class="c r o" style="left:894.50px;top:263.80px;width:100.40px"><span style="transform:scaleX(0.89)">32.150,70 €</span></div>
<div class="c r k" style="left:-0.80px;top:272.60px;width:65.75px"><span style="transform:scaleX(0.89)">2044</span></div>
<div class="c r g" style="left:66.75px;top:272.60px;width:62.45px"><span style="transform:scaleX(0.89)">79%</span></div>
<div class="c r g" style="left:130.50px;top:272.60px;width:62.65px"><span style="transform:scaleX(0.89)">32.200,00 €</span></div>
<div class="c r g" style="left:196.75px;top:272.60px;width:81.40px"><span style="transform:scaleX(0.89)">45.507,57 €</span></div>
<div class="c r g" style="left:281.75px;top:272.60px;width:112.40px"><span style="transform:scaleX(0.89)">46.476,15 €</span></div>
<div class="c r bl" style="left:397.75px;top:272.60px;width:53.45px"><span style="transform:scaleX(0.89)">100%</span></div>
<div class="c r bl" style="left:452.50px;top:272.60px;width:56.40px"><span style="transform:scaleX(0.89)">23.620,00 €</span></div>
<div class="c r bl" style="left:512.50px;top:272.60px;width:82.15px"><span style="transform:scaleX(0.89)">38.194,34 €</span></div>
<div class="c r bl" style="left:598.25px;top:272.60px;width:110.65px"><span style="transform:scaleX(0.89)">39.523,50 €</span></div>
<div class="c r o" style="left:712.50px;top:272.60px;width:44.70px"><span style="transform:scaleX(0.89)">70%</span></div>
<div class="c r o" style="left:758.50px;top:272.60px;width:45.40px"><span style="transform:scaleX(0.89)">32.200,00 €</span></div>
<div class="c r o" style="left:807.50px;top:272.60px;width:83.40px"><span style="transform:scaleX(0.89)">33.350,70 €</span></div>
<div class="c r o" style="left:894.50px;top:272.60px;width:100.40px"><span style="transform:scaleX(0.89)">33.441,12 €</span></div>
<div class="c r k" style="left:-0.80px;top:281.40px;width:65.75px"><span style="transform:scaleX(0.89)">2045</span></div>
<div class="c r g" style="left:66.75px;top:281.40px;width:62.45px"><span style="transform:scaleX(0.89)">73%</span></div>
<div class="c r g" style="left:130.50px;top:281.40px;width:62.65px"><span style="transform:scaleX(0.89)">33.400,00 €</span></div>
<div class="c r g" style="left:196.75px;top:281.40px;width:81.40px"><span style="transform:scaleX(0.89)">47.676,15 €</span></div>
<div class="c r g" style="left:281.75px;top:281.40px;width:112.40px"><span style="transform:scaleX(0.89)">48.577,61 €</span></div>
<div class="c r bl" style="left:397.75px;top:281.40px;width:53.45px"><span style="transform:scaleX(0.89)">100%</span></div>
<div class="c r bl" style="left:452.50px;top:281.40px;width:56.40px"><span style="transform:scaleX(0.89)">24.490,00 €</span></div>
<div class="c r bl" style="left:512.50px;top:281.40px;width:82.15px"><span style="transform:scaleX(0.89)">40.393,50 €</span></div>
<div class="c r bl" style="left:598.25px;top:281.40px;width:110.65px"><span style="transform:scaleX(0.89)">41.799,19 €</span></div>
<div class="c r o" style="left:712.50px;top:281.40px;width:44.70px"><span style="transform:scaleX(0.89)">70%</span></div>
<div class="c r o" style="left:758.50px;top:281.40px;width:45.40px"><span style="transform:scaleX(0.89)">33.400,00 €</span></div>
<div class="c r o" style="left:807.50px;top:281.40px;width:83.40px"><span style="transform:scaleX(0.89)">34.641,12 €</span></div>
<div class="c r o" style="left:894.50px;top:281.40px;width:100.40px"><span style="transform:scaleX(0.89)">34.735,03 €</span></div>
<div class="c r k" style="left:-0.80px;top:290.20px;width:65.75px"><span style="transform:scaleX(0.89)">2046</span></div>
<div class="c r g" style="left:66.75px;top:290.20px;width:62.45px"><span style="transform:scaleX(0.89)">66%</span></div>
<div class="c r g" style="left:130.50px;top:290.20px;width:62.65px"><span style="transform:scaleX(0.89)">34.600,00 €</span></div>
<div class="c r g" style="left:196.75px;top:290.20px;width:81.40px"><span style="transform:scaleX(0.89)">49.777,61 €</span></div>
<div class="c r g" style="left:281.75px;top:290.20px;width:112.40px"><span style="transform:scaleX(0.89)">50.580,82 €</span></div>
<div class="c r bl" style="left:397.75px;top:290.20px;width:53.45px"><span style="transform:scaleX(0.89)">100%</span></div>
<div class="c r bl" style="left:452.50px;top:290.20px;width:56.40px"><span style="transform:scaleX(0.89)">25.360,00 €</span></div>
<div class="c r bl" style="left:512.50px;top:290.20px;width:82.15px"><span style="transform:scaleX(0.89)">42.669,19 €</span></div>
<div class="c r bl" style="left:598.25px;top:290.20px;width:110.65px"><span style="transform:scaleX(0.89)">44.154,08 €</span></div>
<div class="c r o" style="left:712.50px;top:290.20px;width:44.70px"><span style="transform:scaleX(0.89)">70%</span></div>
<div class="c r o" style="left:758.50px;top:290.20px;width:45.40px"><span style="transform:scaleX(0.89)">34.600,00 €</span></div>
<div class="c r o" style="left:807.50px;top:290.20px;width:83.40px"><span style="transform:scaleX(0.89)">35.935,03 €</span></div>
<div class="c r o" style="left:894.50px;top:290.20px;width:100.40px"><span style="transform:scaleX(0.89)">36.032,46 €</span></div>
<div class="c r k" style="left:-0.80px;top:299.00px;width:65.75px"><span style="transform:scaleX(0.89)">2047</span></div>
<div class="c r g" style="left:66.75px;top:299.00px;width:62.45px"><span style="transform:scaleX(0.89)">61%</span></div>
<div class="c r g" style="left:130.50px;top:299.00px;width:62.65px"><span style="transform:scaleX(0.89)">35.800,00 €</span></div>
<div class="c r g" style="left:196.75px;top:299.00px;width:81.40px"><span style="transform:scaleX(0.89)">51.780,82 €</span></div>
<div class="c r g" style="left:281.75px;top:299.00px;width:112.40px"><span style="transform:scaleX(0.89)">52.513,83 €</span></div>
<div class="c r bl" style="left:397.75px;top:299.00px;width:53.45px"><span style="transform:scaleX(0.89)">100%</span></div>
<div class="c r bl" style="left:452.50px;top:299.00px;width:56.40px"><span style="transform:scaleX(0.89)">26.230,00 €</span></div>
<div class="c r bl" style="left:512.50px;top:299.00px;width:82.15px"><span style="transform:scaleX(0.89)">45.024,08 €</span></div>
<div class="c r bl" style="left:598.25px;top:299.00px;width:110.65px"><span style="transform:scaleX(0.89)">46.590,92 €</span></div>
<div class="c r o" style="left:712.50px;top:299.00px;width:44.70px"><span style="transform:scaleX(0.89)">70%</span></div>
<div class="c r o" style="left:758.50px;top:299.00px;width:45.40px"><span style="transform:scaleX(0.89)">35.800,00 €</span></div>
<div class="c r o" style="left:807.50px;top:299.00px;width:83.40px"><span style="transform:scaleX(0.89)">37.232,46 €</span></div>
<div class="c r o" style="left:894.50px;top:299.00px;width:100.40px"><span style="transform:scaleX(0.89)">37.333,41 €</span></div>
<div class="c r k" style="left:-0.80px;top:307.80px;width:65.75px"><span style="transform:scaleX(0.89)">2048</span></div>
<div class="c r g" style="left:66.75px;top:307.80px;width:62.45px"><span style="transform:scaleX(0.89)">54%</span></div>
<div class="c r g" style="left:130.50px;top:307.80px;width:62.65px"><span style="transform:scaleX(0.89)">37.000,00 €</span></div>
<div class="c r g" style="left:196.75px;top:307.80px;width:81.40px"><span style="transform:scaleX(0.89)">53.713,83 €</span></div>
<div class="c r g" style="left:281.75px;top:307.80px;width:112.40px"><span style="transform:scaleX(0.89)">54.325,31 €</span></div>
<div class="c r bl" style="left:397.75px;top:307.80px;width:53.45px"><span style="transform:scaleX(0.89)">100%</span></div>
<div class="c r bl" style="left:452.50px;top:307.80px;width:56.40px"><span style="transform:scaleX(0.89)">27.100,00 €</span></div>
<div class="c r bl" style="left:512.50px;top:307.80px;width:82.15px"><span style="transform:scaleX(0.89)">47.460,92 €</span></div>
<div class="c r bl" style="left:598.25px;top:307.80px;width:110.65px"><span style="transform:scaleX(0.89)">49.112,56 €</span></div>
<div class="c r o" style="left:712.50px;top:307.80px;width:44.70px"><span style="transform:scaleX(0.89)">70%</span></div>
<div class="c r o" style="left:758.50px;top:307.80px;width:45.40px"><span style="transform:scaleX(0.89)">37.000,00 €</span></div>
<div class="c r o" style="left:807.50px;top:307.80px;width:83.40px"><span style="transform:scaleX(0.89)">38.533,41 €</span></div>
<div class="c r o" style="left:894.50px;top:307.80px;width:100.40px"><span style="transform:scaleX(0.89)">38.637,88 €</span></div>
<div class="c r k" style="left:-0.80px;top:316.60px;width:65.75px"><span style="transform:scaleX(0.89)">2049</span></div>
<div class="c r g" style="left:66.75px;top:316.60px;width:62.45px"><span style="transform:scaleX(0.89)">45%</span></div>
<div class="c r g" style="left:130.50px;top:316.60px;width:62.65px"><span style="transform:scaleX(0.89)">38.200,00 €</span></div>
<div class="c r g" style="left:196.75px;top:316.60px;width:81.40px"><span style="transform:scaleX(0.89)">55.525,31 €</span></div>
<div class="c r g" style="left:281.75px;top:316.60px;width:112.40px"><span style="transform:scaleX(0.89)">55.959,52 €</span></div>
<div class="c r bl" style="left:397.75px;top:316.60px;width:53.45px"><span style="transform:scaleX(0.89)">100%</span></div>
<div class="c r bl" style="left:452.50px;top:316.60px;width:56.40px"><span style="transform:scaleX(0.89)">27.970,00 €</span></div>
<div class="c r bl" style="left:512.50px;top:316.60px;width:82.15px"><span style="transform:scaleX(0.89)">49.982,56 €</span></div>
<div class="c r bl" style="left:598.25px;top:316.60px;width:110.65px"><span style="transform:scaleX(0.89)">51.721,95 €</span></div>
<div class="c r o" style="left:712.50px;top:316.60px;width:44.70px"><span style="transform:scaleX(0.89)">70%</span></div>
<div class="c r o" style="left:758.50px;top:316.60px;width:45.40px"><span style="transform:scaleX(0.89)">38.200,00 €</span></div>
<div class="c r o" style="left:807.50px;top:316.60px;width:83.40px"><span style="transform:scaleX(0.89)">39.837,88 €</span></div>
<div class="c r o" style="left:894.50px;top:316.60px;width:100.40px"><span style="transform:scaleX(0.89)">39.945,89 €</span></div>
<div class="c r k" style="left:-0.80px;top:325.40px;width:65.75px"><span style="transform:scaleX(0.89)">2050</span></div>
<div class="c r g" style="left:66.75px;top:325.40px;width:62.45px"><span style="transform:scaleX(0.89)">40%</span></div>
<div class="c r g" style="left:130.50px;top:325.40px;width:62.65px"><span style="transform:scaleX(0.89)">39.400,00 €</span></div>
<div class="c r g" style="left:196.75px;top:325.40px;width:81.40px"><span style="transform:scaleX(0.89)">57.159,52 €</span></div>
<div class="c r g" style="left:281.75px;top:325.40px;width:112.40px"><span style="transform:scaleX(0.89)">57.493,33 €</span></div>
<div class="c r bl" style="left:397.75px;top:325.40px;width:53.45px"><span style="transform:scaleX(0.89)">100%</span></div>
<div class="c r bl" style="left:452.50px;top:325.40px;width:56.40px"><span style="transform:scaleX(0.89)">28.840,00 €</span></div>
<div class="c r bl" style="left:512.50px;top:325.40px;width:82.15px"><span style="transform:scaleX(0.89)">52.591,95 €</span></div>
<div class="c r bl" style="left:598.25px;top:325.40px;width:110.65px"><span style="transform:scaleX(0.89)">54.422,15 €</span></div>
<div class="c r o" style="left:712.50px;top:325.40px;width:44.70px"><span style="transform:scaleX(0.89)">70%</span></div>
<div class="c r o" style="left:758.50px;top:325.40px;width:45.40px"><span style="transform:scaleX(0.89)">39.400,00 €</span></div>
<div class="c r o" style="left:807.50px;top:325.40px;width:83.40px"><span style="transform:scaleX(0.89)">41.145,89 €</span></div>
<div class="c r o" style="left:894.50px;top:325.40px;width:100.40px"><span style="transform:scaleX(0.89)">41.257,44 €</span></div>
<div class="c r k" style="left:-0.80px;top:334.20px;width:65.75px"><span style="transform:scaleX(0.89)">2051</span></div>
<div class="c r g" style="left:66.75px;top:334.20px;width:62.45px"><span style="transform:scaleX(0.89)">34%</span></div>
<div class="c r g" style="left:130.50px;top:334.20px;width:62.65px"><span style="transform:scaleX(0.89)">40.600,00 €</span></div>
<div class="c r g" style="left:196.75px;top:334.20px;width:81.40px"><span style="transform:scaleX(0.89)">58.693,33 €</span></div>
<div class="c r g" style="left:281.75px;top:334.20px;width:112.40px"><span style="transform:scaleX(0.89)">58.896,64 €</span></div>
<div class="c r bl" style="left:397.75px;top:334.20px;width:53.45px"><span style="transform:scaleX(0.89)">100%</span></div>
<div class="c r bl" style="left:452.50px;top:334.20px;width:56.40px"><span style="transform:scaleX(0.89)">29.710,00 €</span></div>
<div class="c r bl" style="left:512.50px;top:334.20px;width:82.15px"><span style="transform:scaleX(0.89)">55.292,15 €</span></div>
<div class="c r bl" style="left:598.25px;top:334.20px;width:110.65px"><span style="transform:scaleX(0.89)">57.216,32 €</span></div>
<div class="c r o" style="left:712.50px;top:334.20px;width:44.70px"><span style="transform:scaleX(0.89)">70%</span></div>
<div class="c r o" style="left:758.50px;top:334.20px;width:45.40px"><span style="transform:scaleX(0.89)">40.600,00 €</span></div>
<div class="c r o" style="left:807.50px;top:334.20px;width:83.40px"><span style="transform:scaleX(0.89)">42.457,44 €</span></div>
<div class="c r o" style="left:894.50px;top:334.20px;width:100.40px"><span style="transform:scaleX(0.89)">42.572,55 €</span></div>
<div class="c r k" style="left:-0.80px;top:343.00px;width:65.75px"><span style="transform:scaleX(0.89)">2052</span></div>
<div class="c r g" style="left:66.75px;top:343.00px;width:62.45px"><span style="transform:scaleX(0.89)">29%</span></div>
<div class="c r g" style="left:130.50px;top:343.00px;width:62.65px"><span style="transform:scaleX(0.89)">41.800,00 €</span></div>
<div class="c r g" style="left:196.75px;top:343.00px;width:81.40px"><span style="transform:scaleX(0.89)">60.096,64 €</span></div>
<div class="c r g" style="left:281.75px;top:343.00px;width:112.40px"><span style="transform:scaleX(0.89)">60.185,83 €</span></div>
<div class="c r bl" style="left:397.75px;top:343.00px;width:53.45px"><span style="transform:scaleX(0.89)">100%</span></div>
<div class="c r bl" style="left:452.50px;top:343.00px;width:56.40px"><span style="transform:scaleX(0.89)">30.580,00 €</span></div>
<div class="c r bl" style="left:512.50px;top:343.00px;width:82.15px"><span style="transform:scaleX(0.89)">58.086,32 €</span></div>
<div class="c r bl" style="left:598.25px;top:343.00px;width:110.65px"><span style="transform:scaleX(0.89)">60.107,72 €</span></div>
<div class="c r o" style="left:712.50px;top:343.00px;width:44.70px"><span style="transform:scaleX(0.89)">70%</span></div>
<div class="c r o" style="left:758.50px;top:343.00px;width:45.40px"><span style="transform:scaleX(0.89)">41.800,00 €</span></div>
<div class="c r o" style="left:807.50px;top:343.00px;width:83.40px"><span style="transform:scaleX(0.89)">43.772,55 €</span></div>
<div class="c r o" style="left:894.50px;top:343.00px;width:100.40px"><span style="transform:scaleX(0.89)">43.891,23 €</span></div>
<div class="c r k" style="left:-0.80px;top:351.80px;width:65.75px"><span style="transform:scaleX(0.89)">2053</span></div>
<div class="c r g" style="left:66.75px;top:351.80px;width:62.45px"><span style="transform:scaleX(0.89)">24%</span></div>
<div class="c r g" style="left:130.50px;top:351.80px;width:62.65px"><span style="transform:scaleX(0.89)">43.000,00 €</span></div>
<div class="c r g" style="left:196.75px;top:351.80px;width:81.40px"><span style="transform:scaleX(0.89)">61.385,83 €</span></div>
<div class="c r g" style="left:281.75px;top:351.80px;width:112.40px"><span style="transform:scaleX(0.89)">61.355,38 €</span></div>
<div class="c r bl" style="left:397.75px;top:351.80px;width:53.45px"><span style="transform:scaleX(0.89)">100%</span></div>
<div class="c r bl" style="left:452.50px;top:351.80px;width:56.40px"><span style="transform:scaleX(0.89)">31.450,00 €</span></div>
<div class="c r bl" style="left:512.50px;top:351.80px;width:82.15px"><span style="transform:scaleX(0.89)">60.977,72 €</span></div>
<div class="c r bl" style="left:598.25px;top:351.80px;width:110.65px"><span style="transform:scaleX(0.89)">63.099,75 €</span></div>
<div class="c r o" style="left:712.50px;top:351.80px;width:44.70px"><span style="transform:scaleX(0.89)">70%</span></div>
<div class="c r o" style="left:758.50px;top:351.80px;width:45.40px"><span style="transform:scaleX(0.89)">43.000,00 €</span></div>
<div class="c r o" style="left:807.50px;top:351.80px;width:83.40px"><span style="transform:scaleX(0.89)">45.091,23 €</span></div>
<div class="c r o" style="left:894.50px;top:351.80px;width:100.40px"><span style="transform:scaleX(0.89)">45.213,48 €</span></div>
<div class="c r k" style="left:-0.80px;top:360.60px;width:65.75px"><span style="transform:scaleX(0.89)">2054</span></div>
<div class="c r g" style="left:66.75px;top:360.60px;width:62.45px"><span style="transform:scaleX(0.89)">19%</span></div>
<div class="c r g" style="left:130.50px;top:360.60px;width:62.65px"><span style="transform:scaleX(0.89)">44.200,00 €</span></div>
<div class="c r g" style="left:196.75px;top:360.60px;width:81.40px"><span style="transform:scaleX(0.89)">62.555,38 €</span></div>
<div class="c r g" style="left:281.75px;top:360.60px;width:112.40px"><span style="transform:scaleX(0.89)">62.400,49 €</span></div>
<div class="c r bl" style="left:397.75px;top:360.60px;width:53.45px"><span style="transform:scaleX(0.89)">100%</span></div>
<div class="c r bl" style="left:452.50px;top:360.60px;width:56.40px"><span style="transform:scaleX(0.89)">32.320,00 €</span></div>
<div class="c r bl" style="left:512.50px;top:360.60px;width:82.15px"><span style="transform:scaleX(0.89)">63.969,75 €</span></div>
<div class="c r bl" style="left:598.25px;top:360.60px;width:110.65px"><span style="transform:scaleX(0.89)">66.195,90 €</span></div>
<div class="c r o" style="left:712.50px;top:360.60px;width:44.70px"><span style="transform:scaleX(0.89)">70%</span></div>
<div class="c r o" style="left:758.50px;top:360.60px;width:45.40px"><span style="transform:scaleX(0.89)">44.200,00 €</span></div>
<div class="c r o" style="left:807.50px;top:360.60px;width:83.40px"><span style="transform:scaleX(0.89)">46.413,48 €</span></div>
<div class="c r o" style="left:894.50px;top:360.60px;width:100.40px"><span style="transform:scaleX(0.89)">46.539,32 €</span></div>
<div class="c r k" style="left:-0.80px;top:369.40px;width:65.75px"><span style="transform:scaleX(0.89)">2055</span></div>
<div class="c r g" style="left:66.75px;top:369.40px;width:62.45px"><span style="transform:scaleX(0.89)">16%</span></div>
<div class="c r g" style="left:130.50px;top:369.40px;width:62.65px"><span style="transform:scaleX(0.89)">45.400,00 €</span></div>
<div class="c r g" style="left:196.75px;top:369.40px;width:81.40px"><span style="transform:scaleX(0.89)">63.600,49 €</span></div>
<div class="c r g" style="left:281.75px;top:369.40px;width:112.40px"><span style="transform:scaleX(0.89)">63.367,46 €</span></div>
<div class="c r bl" style="left:397.75px;top:369.40px;width:53.45px"><span style="transform:scaleX(0.89)">100%</span></div>
<div class="c r bl" style="left:452.50px;top:369.40px;width:56.40px"><span style="transform:scaleX(0.89)">33.190,00 €</span></div>
<div class="c r bl" style="left:512.50px;top:369.40px;width:82.15px"><span style="transform:scaleX(0.89)">67.065,90 €</span></div>
<div class="c r bl" style="left:598.25px;top:369.40px;width:110.65px"><span style="transform:scaleX(0.89)">69.399,79 €</span></div>
<div class="c r o" style="left:712.50px;top:369.40px;width:44.70px"><span style="transform:scaleX(0.89)">70%</span></div>
<div class="c r o" style="left:758.50px;top:369.40px;width:45.40px"><span style="transform:scaleX(0.89)">45.400,00 €</span></div>
<div class="c r o" style="left:807.50px;top:369.40px;width:83.40px"><span style="transform:scaleX(0.89)">47.739,32 €</span></div>
<div class="c r o" style="left:894.50px;top:369.40px;width:100.40px"><span style="transform:scaleX(0.89)">47.868,75 €</span></div>
<div class="c r k" style="left:-0.80px;top:378.20px;width:65.75px"><span style="transform:scaleX(0.89)">2056</span></div>
<div class="c r g" style="left:66.75px;top:378.20px;width:62.45px"><span style="transform:scaleX(0.89)">12%</span></div>
<div class="c r g" style="left:130.50px;top:378.20px;width:62.65px"><span style="transform:scaleX(0.89)">46.600,00 €</span></div>
<div class="c r g" style="left:196.75px;top:378.20px;width:81.40px"><span style="transform:scaleX(0.89)">64.567,46 €</span></div>
<div class="c r g" style="left:281.75px;top:378.20px;width:112.40px"><span style="transform:scaleX(0.89)">64.228,61 €</span></div>
<div class="c r bl" style="left:397.75px;top:378.20px;width:53.45px"><span style="transform:scaleX(0.89)">100%</span></div>
<div class="c r bl" style="left:452.50px;top:378.20px;width:56.40px"><span style="transform:scaleX(0.89)">34.060,00 €</span></div>
<div class="c r bl" style="left:512.50px;top:378.20px;width:82.15px"><span style="transform:scaleX(0.89)">70.269,79 €</span></div>
<div class="c r bl" style="left:598.25px;top:378.20px;width:110.65px"><span style="transform:scaleX(0.89)">72.715,18 €</span></div>
<div class="c r o" style="left:712.50px;top:378.20px;width:44.70px"><span style="transform:scaleX(0.89)">70%</span></div>
<div class="c r o" style="left:758.50px;top:378.20px;width:45.40px"><span style="transform:scaleX(0.89)">46.600,00 €</span></div>
<div class="c r o" style="left:807.50px;top:378.20px;width:83.40px"><span style="transform:scaleX(0.89)">49.068,75 €</span></div>
<div class="c r o" style="left:894.50px;top:378.20px;width:100.40px"><span style="transform:scaleX(0.89)">49.201,78 €</span></div>
<div class="c r k" style="left:-0.80px;top:387.00px;width:65.75px"><span style="transform:scaleX(0.89)">2057</span></div>
<div class="c r g" style="left:66.75px;top:387.00px;width:62.45px"><span style="transform:scaleX(0.89)">12%</span></div>
<div class="c r g" style="left:130.50px;top:387.00px;width:62.65px"><span style="transform:scaleX(0.89)">47.800,00 €</span></div>
<div class="c r g" style="left:196.75px;top:387.00px;width:81.40px"><span style="transform:scaleX(0.89)">65.428,61 €</span></div>
<div class="c r g" style="left:281.75px;top:387.00px;width:112.40px"><span style="transform:scaleX(0.89)">65.085,24 €</span></div>
<div class="c r bl" style="left:397.75px;top:387.00px;width:53.45px"><span style="transform:scaleX(0.89)">100%</span></div>
<div class="c r bl" style="left:452.50px;top:387.00px;width:56.40px"><span style="transform:scaleX(0.89)">34.930,00 €</span></div>
<div class="c r bl" style="left:512.50px;top:387.00px;width:82.15px"><span style="transform:scaleX(0.89)">73.585,18 €</span></div>
<div class="c r bl" style="left:598.25px;top:387.00px;width:110.65px"><span style="transform:scaleX(0.89)">76.145,94 €</span></div>
<div class="c r o" style="left:712.50px;top:387.00px;width:44.70px"><span style="transform:scaleX(0.89)">70%</span></div>
<div class="c r o" style="left:758.50px;top:387.00px;width:45.40px"><span style="transform:scaleX(0.89)">47.800,00 €</span></div>
<div class="c r o" style="left:807.50px;top:387.00px;width:83.40px"><span style="transform:scaleX(0.89)">50.401,78 €</span></div>
<div class="c r o" style="left:894.50px;top:387.00px;width:100.40px"><span style="transform:scaleX(0.89)">50.538,43 €</span></div>
<div class="c r k" style="left:-0.80px;top:395.80px;width:65.75px"><span style="transform:scaleX(0.89)">2058</span></div>
<div class="c r g" style="left:66.75px;top:395.80px;width:62.45px"><span style="transform:scaleX(0.89)">12%</span></div>
<div class="c r g" style="left:130.50px;top:395.80px;width:62.65px"><span style="transform:scaleX(0.89)">49.000,00 €</span></div>
<div class="c r g" style="left:196.75px;top:395.80px;width:81.40px"><span style="transform:scaleX(0.89)">66.285,24 €</span></div>
<div class="c r g" style="left:281.75px;top:395.80px;width:112.40px"><span style="transform:scaleX(0.89)">65.937,38 €</span></div>
<div class="c r bl" style="left:397.75px;top:395.80px;width:53.45px"><span style="transform:scaleX(0.89)">100%</span></div>
<div class="c r bl" style="left:452.50px;top:395.80px;width:56.40px"><span style="transform:scaleX(0.89)">35.800,00 €</span></div>
<div class="c r bl" style="left:512.50px;top:395.80px;width:82.15px"><span style="transform:scaleX(0.89)">77.015,94 €</span></div>
<div class="c r bl" style="left:598.25px;top:395.80px;width:110.65px"><span style="transform:scaleX(0.89)">79.696,10 €</span></div>
<div class="c r o" style="left:712.50px;top:395.80px;width:44.70px"><span style="transform:scaleX(0.89)">70%</span></div>
<div class="c r o" style="left:758.50px;top:395.80px;width:45.40px"><span style="transform:scaleX(0.89)">49.000,00 €</span></div>
<div class="c r o" style="left:807.50px;top:395.80px;width:83.40px"><span style="transform:scaleX(0.89)">51.738,43 €</span></div>
<div class="c r o" style="left:894.50px;top:395.80px;width:100.40px"><span style="transform:scaleX(0.89)">51.878,70 €</span></div>
<div class="c r k" style="left:-0.80px;top:404.60px;width:65.75px"><span style="transform:scaleX(0.89)">2059</span></div>
<div class="c r g" style="left:66.75px;top:404.60px;width:62.45px"><span style="transform:scaleX(0.89)">12%</span></div>
<div class="c r g" style="left:130.50px;top:404.60px;width:62.65px"><span style="transform:scaleX(0.89)">50.200,00 €</span></div>
<div class="c r g" style="left:196.75px;top:404.60px;width:81.40px"><span style="transform:scaleX(0.89)">67.137,38 €</span></div>
<div class="c r g" style="left:281.75px;top:404.60px;width:112.40px"><span style="transform:scaleX(0.89)">66.785,04 €</span></div>
<div class="c r bl" style="left:397.75px;top:404.60px;width:53.45px"><span style="transform:scaleX(0.89)">100%</span></div>
<div class="c r bl" style="left:452.50px;top:404.60px;width:56.40px"><span style="transform:scaleX(0.89)">36.670,00 €</span></div>
<div class="c r bl" style="left:512.50px;top:404.60px;width:82.15px"><span style="transform:scaleX(0.89)">80.566,10 €</span></div>
<div class="c r bl" style="left:598.25px;top:404.60px;width:110.65px"><span style="transform:scaleX(0.89)">83.369,80 €</span></div>
<div class="c r o" style="left:712.50px;top:404.60px;width:44.70px"><span style="transform:scaleX(0.89)">70%</span></div>
<div class="c r o" style="left:758.50px;top:404.60px;width:45.40px"><span style="transform:scaleX(0.89)">50.200,00 €</span></div>
<div class="c r o" style="left:807.50px;top:404.60px;width:83.40px"><span style="transform:scaleX(0.89)">53.078,70 €</span></div>
<div class="c r o" style="left:894.50px;top:404.60px;width:100.40px"><span style="transform:scaleX(0.89)">53.222,61 €</span></div>
<div class="c r k" style="left:-0.80px;top:413.40px;width:65.75px"><span style="transform:scaleX(0.89)">2060</span></div>
<div class="c r g" style="left:66.75px;top:413.40px;width:62.45px"><span style="transform:scaleX(0.89)">12%</span></div>
<div class="c r g" style="left:130.50px;top:413.40px;width:62.65px"><span style="transform:scaleX(0.89)">51.400,00 €</span></div>
<div class="c r g" style="left:196.75px;top:413.40px;width:81.40px"><span style="transform:scaleX(0.89)">67.985,04 €</span></div>
<div class="c r g" style="left:281.75px;top:413.40px;width:112.40px"><span style="transform:scaleX(0.89)">67.628,25 €</span></div>
<div class="c r bl" style="left:397.75px;top:413.40px;width:53.45px"><span style="transform:scaleX(0.89)">100%</span></div>
<div class="c r bl" style="left:452.50px;top:413.40px;width:56.40px"><span style="transform:scaleX(0.89)">37.540,00 €</span></div>
<div class="c r bl" style="left:512.50px;top:413.40px;width:82.15px"><span style="transform:scaleX(0.89)">84.239,80 €</span></div>
<div class="c r bl" style="left:598.25px;top:413.40px;width:110.65px"><span style="transform:scaleX(0.89)">87.171,34 €</span></div>
<div class="c r o" style="left:712.50px;top:413.40px;width:44.70px"><span style="transform:scaleX(0.89)">70%</span></div>
<div class="c r o" style="left:758.50px;top:413.40px;width:45.40px"><span style="transform:scaleX(0.89)">51.400,00 €</span></div>
<div class="c r o" style="left:807.50px;top:413.40px;width:83.40px"><span style="transform:scaleX(0.89)">54.422,61 €</span></div>
<div class="c r o" style="left:894.50px;top:413.40px;width:100.40px"><span style="transform:scaleX(0.89)">54.570,16 €</span></div>
<div class="c r k" style="left:-0.80px;top:422.20px;width:65.75px"><span style="transform:scaleX(0.89)">2061</span></div>
<div class="c r g" style="left:66.75px;top:422.20px;width:62.45px"><span style="transform:scaleX(0.89)">12%</span></div>
<div class="c r g" style="left:130.50px;top:422.20px;width:62.65px"><span style="transform:scaleX(0.89)">52.600,00 €</span></div>
<div class="c r g" style="left:196.75px;top:422.20px;width:81.40px"><span style="transform:scaleX(0.89)">68.828,25 €</span></div>
<div class="c r g" style="left:281.75px;top:422.20px;width:112.40px"><span style="transform:scaleX(0.89)">68.467,04 €</span></div>
<div class="c r bl" style="left:397.75px;top:422.20px;width:53.45px"><span style="transform:scaleX(0.89)">100%</span></div>
<div class="c r bl" style="left:452.50px;top:422.20px;width:56.40px"><span style="transform:scaleX(0.89)">38.410,00 €</span></div>
<div class="c r bl" style="left:512.50px;top:422.20px;width:82.15px"><span style="transform:scaleX(0.89)">88.041,34 €</span></div>
<div class="c r bl" style="left:598.25px;top:422.20px;width:110.65px"><span style="transform:scaleX(0.89)">91.105,18 €</span></div>
<div class="c r o" style="left:712.50px;top:422.20px;width:44.70px"><span style="transform:scaleX(0.89)">70%</span></div>
<div class="c r o" style="left:758.50px;top:422.20px;width:45.40px"><span style="transform:scaleX(0.89)">52.600,00 €</span></div>
<div class="c r o" style="left:807.50px;top:422.20px;width:83.40px"><span style="transform:scaleX(0.89)">55.770,16 €</span></div>
<div class="c r o" style="left:894.50px;top:422.20px;width:100.40px"><span style="transform:scaleX(0.89)">55.921,37 €</span></div>
<div class="c r k" style="left:-0.80px;top:431.00px;width:65.75px"><span style="transform:scaleX(0.89)">2062</span></div>
<div class="c r g" style="left:66.75px;top:431.00px;width:62.45px"><span style="transform:scaleX(0.89)">12%</span></div>
<div class="c r g" style="left:130.50px;top:431.00px;width:62.65px"><span style="transform:scaleX(0.89)">53.800,00 €</span></div>
<div class="c r g" style="left:196.75px;top:431.00px;width:81.40px"><span style="transform:scaleX(0.89)">69.667,04 €</span></div>
<div class="c r g" style="left:281.75px;top:431.00px;width:112.40px"><span style="transform:scaleX(0.89)">69.301,43 €</span></div>
<div class="c r bl" style="left:397.75px;top:431.00px;width:53.45px"><span style="transform:scaleX(0.89)">100%</span></div>
<div class="c r bl" style="left:452.50px;top:431.00px;width:56.40px"><span style="transform:scaleX(0.89)">39.280,00 €</span></div>
<div class="c r bl" style="left:512.50px;top:431.00px;width:82.15px"><span style="transform:scaleX(0.89)">91.975,18 €</span></div>
<div class="c r bl" style="left:598.25px;top:431.00px;width:110.65px"><span style="transform:scaleX(0.89)">95.175,92 €</span></div>
<div class="c r o" style="left:712.50px;top:431.00px;width:44.70px"><span style="transform:scaleX(0.89)">70%</span></div>
<div class="c r o" style="left:758.50px;top:431.00px;width:45.40px"><span style="transform:scaleX(0.89)">53.800,00 €</span></div>
<div class="c r o" style="left:807.50px;top:431.00px;width:83.40px"><span style="transform:scaleX(0.89)">57.121,37 €</span></div>
<div class="c r o" style="left:894.50px;top:431.00px;width:100.40px"><span style="transform:scaleX(0.89)">57.276,23 €</span></div>
<div class="c l k" style="left:0.60px;top:439.80px;width:129.90px"><span style="transform:scaleX(0.998)">Nach Steuern:</span></div>
<div class="c r b" style="left:281.75px;top:439.80px;width:112.40px"><span style="transform:scaleX(0.89)">51.976,07 €</span></div>
<div class="c r b" style="left:598.25px;top:439.80px;width:110.65px"><span style="transform:scaleX(0.89)">80.642,98 €</span></div>
<div class="c r b" style="left:894.50px;top:439.80px;width:100.40px"><span style="transform:scaleX(0.89)">42.957,18 €</span></div>
</div></body></html>
